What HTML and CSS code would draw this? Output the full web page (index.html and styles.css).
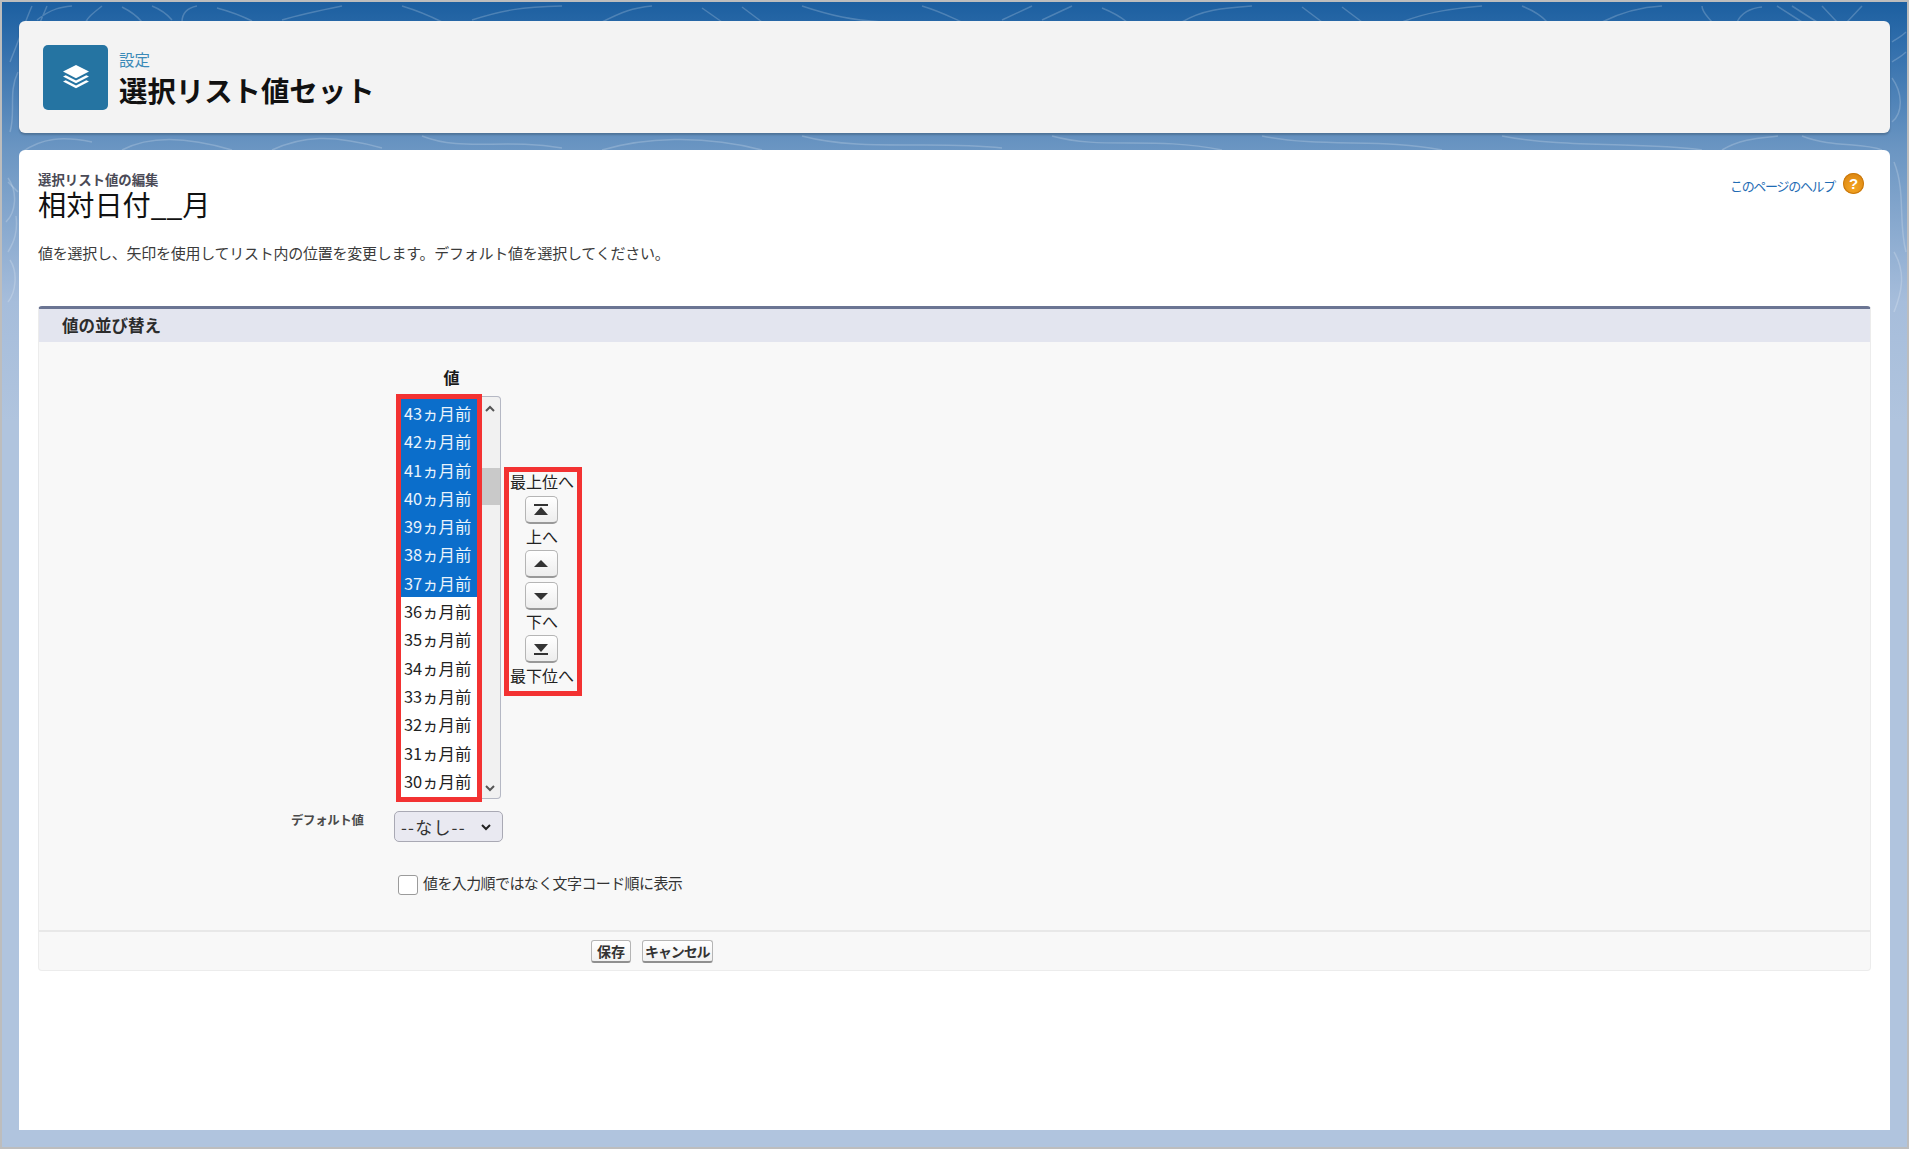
FILE: index.html
```html
<!DOCTYPE html>
<html lang="ja">
<head>
<meta charset="utf-8">
<title>選択リスト値セット</title>
<link rel="stylesheet" href="styles.css">
</head>
<body>
<div class="frame">
  <svg class="contours" viewBox="0 0 1905 340" preserveAspectRatio="none" aria-hidden="true">
    <g fill="none" stroke="#fff" stroke-opacity=".2" stroke-width="1.5">
      <path d="M8 60C20 30 25 15 30 4M20 70C30 40 38 20 45 4M35 18C50 6 60 5 70 4M100 4C90 12 85 16 84 20M120 5C130 10 135 14 140 20M150 4C160 8 165 12 170 18M180 20C180 12 185 6 195 4M215 6C230 10 240 14 250 19M280 18C300 12 320 8 340 4M400 4C420 10 430 15 440 20M470 18C500 8 520 5 560 4M600 20C620 10 630 6 650 4M700 6L720 20M740 5L760 20M800 4C830 14 850 18 880 20M920 4C940 10 950 16 960 20M1000 18L1030 4M1040 18L1070 4M1100 6C1110 10 1120 16 1125 20M1180 20C1200 8 1220 6 1250 4M1300 5L1320 20M1340 5L1360 20M1400 20C1430 8 1460 6 1480 4M1520 4C1530 8 1540 14 1545 20M1600 20C1620 10 1640 5 1660 4M1700 4C1700 10 1705 14 1710 20M1735 20C1740 10 1750 6 1760 5M1775 4L1800 20M1790 4L1815 20M1820 4L1835 20M1845 20L1860 4"/>
      <path d="M8 130C14 110 6 90 16 70M6 180L16 190M1890 40C1896 36 1900 34 1904 30M1890 60C1896 56 1900 54 1904 50M1890 120C1902 110 1900 90 1890 76"/>
      <path d="M20 150C40 136 60 134 90 140M120 148C150 132 190 136 230 148M270 148C300 134 330 132 380 146M420 134C460 150 500 136 560 146M600 148C640 136 700 132 760 148M800 134C860 150 930 138 1000 146M1050 134C1100 148 1150 134 1220 148M1260 134C1320 146 1380 136 1440 148M1500 134C1560 146 1640 140 1700 148M1720 148C1740 136 1760 136 1776 134M1800 134C1830 146 1860 140 1880 148"/>
      <path d="M4 220C14 210 16 190 6 176M6 250C12 240 16 230 14 214M6 300C14 290 16 270 8 258M1892 160C1904 190 1896 220 1904 250M1892 250C1904 270 1900 290 1892 310"/>
    </g>
  </svg>

  <header class="page-head">
    <div class="app-icon">
      <svg viewBox="0 0 30 30" class="app-glyph" aria-hidden="true">
        <path d="M15 3 28 9.6 15 16.2 2 9.6Z"/>
        <path d="M4.7 13.2 15 18.4 25.3 13.2 28 14.6 15 21.2 2 14.6Z"/>
        <path d="M4.7 18.2 15 23.4 25.3 18.2 28 19.6 15 26.2 2 19.6Z"/>
      </svg>
    </div>
    <div class="head-text">
      <div class="crumb">設定</div>
      <h1 class="page-title">選択リスト値セット</h1>
    </div>
  </header>

  <main class="content">
    <div class="top-row">
      <div>
        <div class="sub-title">選択リスト値の編集</div>
        <h2 class="record-title">相対日付__月</h2>
      </div>
      <a class="help-link"><span class="help-text">このページのヘルプ</span><span class="help-icon">?</span></a>
    </div>
    <p class="intro">値を選択し、矢印を使用してリスト内の位置を変更します。デフォルト値を選択してください。</p>

    <section class="panel">
      <div class="panel-head">値の並び替え</div>
      <div class="panel-body">
        <div class="picker-col">
          <div class="col-title">値</div>
          <div class="picker-row">
            <div class="listbox">
              <div class="items">
                <div class="item sel">43ヵ月前</div>
                <div class="item sel">42ヵ月前</div>
                <div class="item sel">41ヵ月前</div>
                <div class="item sel">40ヵ月前</div>
                <div class="item sel">39ヵ月前</div>
                <div class="item sel">38ヵ月前</div>
                <div class="item sel">37ヵ月前</div>
                <div class="item">36ヵ月前</div>
                <div class="item">35ヵ月前</div>
                <div class="item">34ヵ月前</div>
                <div class="item">33ヵ月前</div>
                <div class="item">32ヵ月前</div>
                <div class="item">31ヵ月前</div>
                <div class="item">30ヵ月前</div>
              </div>
              <div class="scrollbar">
                <svg class="sb-arrow top" viewBox="0 0 12 8" aria-hidden="true"><path d="M2 6 6 2 10 6"/></svg>
                <div class="sb-track"><div class="sb-thumb"></div></div>
                <svg class="sb-arrow" viewBox="0 0 12 8" aria-hidden="true"><path d="M2 2 6 6 10 2"/></svg>
              </div>
            </div>
            <div class="mover">
              <div class="mv-label first">最上位へ</div>
              <button class="mv-btn"><svg viewBox="0 0 20 14" aria-hidden="true"><path d="M3 1H17V3H3ZM10 4 17 12H3Z"/></svg></button>
              <div class="mv-label up">上へ</div>
              <button class="mv-btn"><svg viewBox="0 0 20 14" aria-hidden="true"><path d="M10 3 17 10H3Z"/></svg></button>
              <button class="mv-btn next"><svg viewBox="0 0 20 14" aria-hidden="true"><path d="M3 4H17L10 11Z"/></svg></button>
              <div class="mv-label down">下へ</div>
              <button class="mv-btn"><svg viewBox="0 0 20 14" aria-hidden="true"><path d="M3 2H17L10 10ZM3 11H17V13H3Z"/></svg></button>
              <div class="mv-label last">最下位へ</div>
            </div>
          </div>
        </div>

        <div class="default-row">
          <div class="field-label">デフォルト値</div>
          <div class="fake-select"><span>--なし--</span>
            <svg viewBox="0 0 12 8" class="sel-arrow" aria-hidden="true"><path d="M2 2 6 6 10 2"/></svg>
          </div>
        </div>
        <div class="check-row">
          <span class="check-box"></span>
          <span class="check-label">値を入力順ではなく文字コード順に表示</span>
        </div>
      </div>
      <div class="panel-foot">
        <button class="btn">保存</button>
        <button class="btn btn-tight">キャンセル</button>
      </div>
    </section>
  </main>
</div>
</body>
</html>
```
FILE: styles.css
```css
* { box-sizing: border-box; }
html, body { margin: 0; height: 100%; }
body {
  font-family: "Noto Sans CJK JP", "Noto Sans", sans-serif;
  color: #1a1a1a;
  background: #fff;
}
.frame {
  position: relative;
  height: 1149px;
  border: 2px solid #bdbdbd;
  padding: 19px 17px 17px;
  display: flex;
  flex-direction: column;
  gap: 17px;
  background: linear-gradient(#1c5fa0 0, #2f6dab 40px, #6a95c2 145px, #a6bddb 300px, #b0c4de 420px);
}
.contours {
  position: absolute;
  left: 0;
  top: 0;
  width: 100%;
  height: 340px;
}
.page-head {
  position: relative;
  height: 112px;
  flex: none;
  background: #f3f3f3;
  border-radius: 6px;
  box-shadow: 0 2px 2px rgba(0,0,0,.2);
  padding-left: 24px;
  display: flex;
  align-items: center;
  gap: 11px;
}
.app-icon {
  width: 65px;
  height: 65px;
  border-radius: 5px;
  background: #2574a2;
  display: flex;
  align-items: center;
  justify-content: center;
}
.app-glyph { width: 30px; height: 30px; fill: #fff; }
.head-text { margin-top: 2px; }
.crumb { font-size: 15.5px; line-height: 20px; color: #3b8ab8; }
.page-title {
  margin: 3px 0 0;
  font-size: 28.4px;
  line-height: 36px;
  font-weight: 700;
  color: #111;
}
.content {
  position: relative;
  flex: 1;
  background: #fff;
  border-radius: 6px 6px 0 0;
  padding: 21px 19px 0;
}
.top-row { display: flex; justify-content: space-between; align-items: flex-start; }
.sub-title {
  font-size: 13.4px;
  line-height: 17px;
  font-weight: 700;
  color: #4a4a56;
}
.record-title {
  margin: 0;
  font-size: 28.2px;
  font-weight: 400;
  line-height: 31px;
  color: #111;
}
.help-link {
  display: flex;
  align-items: center;
  gap: 8px;
  margin-right: 7px;
  margin-top: -1px;
}
.help-text {
  font-size: 13px;
  line-height: 22px;
  letter-spacing: -1.3px;
  margin-top: 5px;
  color: #1f6cb4;
}
.help-icon {
  width: 21px;
  height: 21px;
  border-radius: 50%;
  background: radial-gradient(circle at 50% 70%, #f5a623, #d67f0e);
  box-shadow: inset 0 0 0 1px #c9780c;
  color: #fff;
  font: 700 15px/21px "Liberation Sans", sans-serif;
  text-align: center;
}
.intro {
  margin: 23px 0 0;
  font-size: 15px;
  line-height: 22px;
  letter-spacing: -.25px;
  color: #3b3b3b;
}
.panel {
  margin-top: 42px;
  height: 665px;
  display: flex;
  flex-direction: column;
  background: #f8f8f8;
  border: 1px solid #ececec;
  border-top: 3px solid #6b7593;
  border-radius: 4px;
}
.panel-head {
  height: 33px;
  flex: none;
  background: #e3e5ef;
  padding-left: 23px;
  font-size: 16.5px;
  line-height: 33px;
  font-weight: 700;
  color: #2c2c2c;
}
.panel-body { flex: 1; padding: 23px 0 0 357px; }
.picker-col { display: flex; flex-direction: column; }
.col-title {
  width: 111px;
  text-align: center;
  font-size: 16px;
  line-height: 24px;
  font-weight: 700;
  color: #1a1a1a;
}
.picker-row { display: flex; align-items: flex-start; margin-top: 5px; }
.listbox { display: flex; align-items: flex-start; flex: none; }
.items {
  width: 86px;
  height: 408px;
  flex: none;
  border: 5px solid #f33232;
  background: #fff;
}
.item {
  height: 28.3px;
  padding-left: 3px;
  font-size: 16.4px;
  line-height: 29.5px;
  color: #222;
  white-space: nowrap;
}
.item.sel { background: #0b6ecb; color: #e9f3fb; }
.scrollbar {
  width: 19px;
  height: 403px;
  margin-top: 2px;
  padding-right: 3px;
  display: flex;
  flex-direction: column;
  align-items: center;
  background: #f1f1f1;
  border: 1px solid #b5b8c4;
  border-left: 0;
  border-radius: 0 4px 4px 0;
}
.sb-arrow {
  width: 12px;
  height: 8px;
  flex: none;
  margin: 6px 0;
  fill: none;
  stroke: #555;
  stroke-width: 2;
}
.sb-arrow.top { margin-top: 8px; }
.sb-track { flex: 1; width: 100%; }
.sb-thumb { height: 37px; margin-top: 49px; width: 18px; background: #c9c9c9; }
.mover {
  margin: 73px 0 0 3px;
  width: 78px;
  height: 229px;
  border: 5px solid #f33232;
  padding-right: 2px;
  display: flex;
  flex-direction: column;
  align-items: center;
  background: #f8f8f8;
}
.mv-label { font-size: 16px; line-height: 23px; color: #222; white-space: nowrap; }
.mv-label.first { margin-top: -2px; margin-bottom: 3px; }
.mv-label.up { margin-top: 1px; margin-bottom: 2px; }
.mv-label.down { margin-bottom: 2px; }
.mv-label.last { margin-top: 1px; }
.mv-btn {
  width: 33px;
  height: 28px;
  flex: none;
  margin-right: 2px;
  padding: 0;
  display: flex;
  align-items: center;
  justify-content: center;
  background: linear-gradient(#fff, #ededed);
  border: 1px solid #b5b5b5;
  border-bottom: 2px solid #999;
  border-radius: 5px;
}
.mv-btn.next { margin-top: 4px; }
.mv-btn svg { width: 20px; height: 14px; fill: #333; }
.default-row { display: flex; align-items: flex-start; margin: 9px 0 0 -105px; }
.field-label {
  width: 103px;
  font-size: 12.4px;
  line-height: 18px;
  font-weight: 700;
  letter-spacing: -.3px;
  color: #4a4a4a;
}
.fake-select {
  width: 109px;
  height: 31px;
  display: flex;
  align-items: center;
  justify-content: space-between;
  padding: 0 10px 0 6px;
  background: #e9e9f1;
  border: 1px solid #a9a9b4;
  border-radius: 5px;
  font-size: 17px;
  letter-spacing: 1.2px;
  color: #333;
}
.sel-arrow { width: 12px; height: 8px; fill: none; stroke: #222; stroke-width: 2; }
.check-row { display: flex; align-items: flex-start; gap: 5px; margin: 31px 0 0 2px; }
.check-box {
  width: 20px;
  height: 20px;
  margin-top: 2px;
  background: #fff;
  border: 1px solid #9b9b9b;
  border-radius: 3px;
}
.check-label { font-size: 15px; line-height: 20px; letter-spacing: -.6px; color: #333; }
.panel-foot {
  height: 40px;
  flex: none;
  border-top: 2px solid #e8e8e8;
  padding: 8px 0 0 552px;
  display: flex;
  align-items: flex-start;
  gap: 11px;
}
.btn {
  height: 23px;
  padding: 0 5px;
  background: linear-gradient(#fff, #f1f1f1);
  border: 1px solid #b5b5b5;
  border-bottom: 2px solid #8f8f8f;
  border-radius: 3px;
  font: 700 14px/19px "Noto Sans CJK JP", sans-serif;
  color: #333;
}
.btn-tight { padding: 0 2px; letter-spacing: -1.1px; }
```
